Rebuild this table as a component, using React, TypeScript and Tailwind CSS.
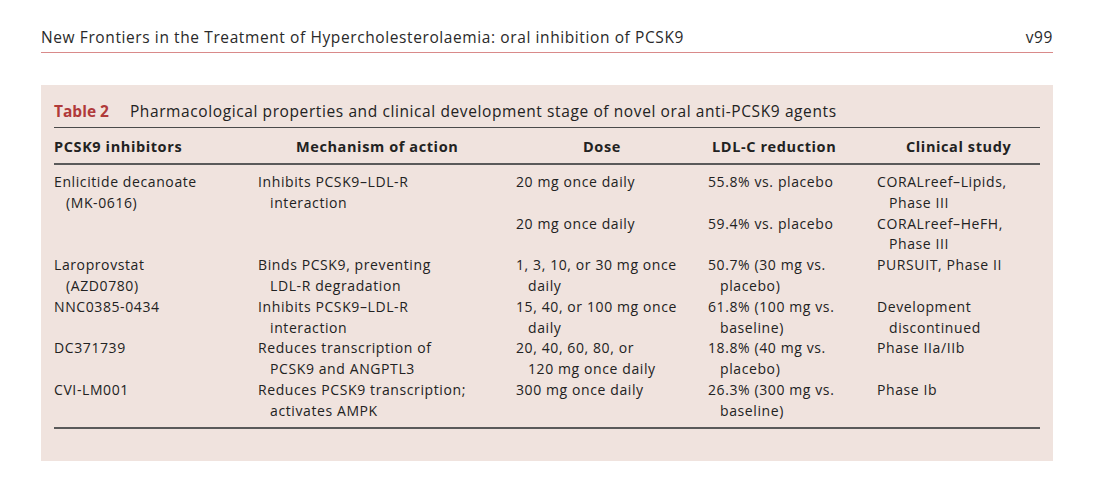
import React from "react";

type Row = {
  agent: string[];
  mech: string[];
  dose: string[];
  ldl: string[];
  study: string[];
};

const rows: Row[] = [
  {
    agent: ["Enlicitide decanoate", "(MK-0616)"],
    mech: ["Inhibits PCSK9–LDL-R", "interaction"],
    dose: ["20 mg once daily"],
    ldl: ["55.8% vs. placebo"],
    study: ["CORALreef–Lipids,", "Phase III"],
  },
  {
    agent: [],
    mech: [],
    dose: ["20 mg once daily"],
    ldl: ["59.4% vs. placebo"],
    study: ["CORALreef–HeFH,", "Phase III"],
  },
  {
    agent: ["Laroprovstat", "(AZD0780)"],
    mech: ["Binds PCSK9, preventing", "LDL-R degradation"],
    dose: ["1, 3, 10, or 30 mg once", "daily"],
    ldl: ["50.7% (30 mg vs.", "placebo)"],
    study: ["PURSUIT, Phase II"],
  },
  {
    agent: ["NNC0385-0434"],
    mech: ["Inhibits PCSK9–LDL-R", "interaction"],
    dose: ["15, 40, or 100 mg once", "daily"],
    ldl: ["61.8% (100 mg vs.", "baseline)"],
    study: ["Development", "discontinued"],
  },
  {
    agent: ["DC371739"],
    mech: ["Reduces transcription of", "PCSK9 and ANGPTL3"],
    dose: ["20, 40, 60, 80, or", "120 mg once daily"],
    ldl: ["18.8% (40 mg vs.", "placebo)"],
    study: ["Phase IIa/IIb"],
  },
  {
    agent: ["CVI-LM001"],
    mech: ["Reduces PCSK9 transcription;", "activates AMPK"],
    dose: ["300 mg once daily"],
    ldl: ["26.3% (300 mg vs.", "baseline)"],
    study: ["Phase Ib"],
  },
];

const Cell: React.FC<{ lines: string[] }> = ({ lines }) => (
  <div className="flex flex-col">
    {lines.map((l, i) => (
      <span key={i} className={i > 0 ? "pl-3" : ""}>
        {l}
      </span>
    ))}
  </div>
);

const grid = "grid grid-cols-[204px_258px_192px_169px_1fr]";

export default function App() {
  return (
    <div className="min-h-[485px] w-[1094px] bg-white font-['Open_Sans',sans-serif] tracking-[0.6px] text-[#222]">
      <div className="px-[41px] pt-[27px]">
        <div className="flex justify-between border-b border-[#d98a8a] pb-[5px] text-[15.5px] leading-[20px] text-[#2a2a2a]">
          <span>New Frontiers in the Treatment of Hypercholesterolaemia: oral inhibition of PCSK9</span>
          <span>v99</span>
        </div>

        <div className="mt-[32px] h-[376px] bg-[#f0e3de] px-[13px] pt-[16px]">
          <div className="border-b border-[#4a4a4a] pb-[5px] text-[15.5px] leading-[21px]">
            <span className="font-bold tracking-normal text-[#b03a3a]">Table 2</span>
            <span className="ml-[21px]">
              Pharmacological properties and clinical development stage of novel oral anti-PCSK9 agents
            </span>
          </div>

          <div className={`${grid} border-b-2 border-[#5a5a5a] pt-[8px] pb-[6px] text-[14.5px] font-bold leading-[21px]`}>
            <span>PCSK9 inhibitors</span>
            <span className="pl-[38px]">Mechanism of action</span>
            <span className="pl-[67px]">Dose</span>
            <span className="pl-[4px]">LDL-C reduction</span>
            <span className="pl-[29px]">Clinical study</span>
          </div>

          <div className="border-b-2 border-[#5a5a5a] pt-[7px] pb-[5px] text-[14px] leading-[20.8px]">
            {rows.map((r, i) => (
              <div key={i} className={grid}>
                <Cell lines={r.agent} />
                <Cell lines={r.mech} />
                <Cell lines={r.dose} />
                <Cell lines={r.ldl} />
                <Cell lines={r.study} />
              </div>
            ))}
          </div>
        </div>
      </div>
    </div>
  );
}
